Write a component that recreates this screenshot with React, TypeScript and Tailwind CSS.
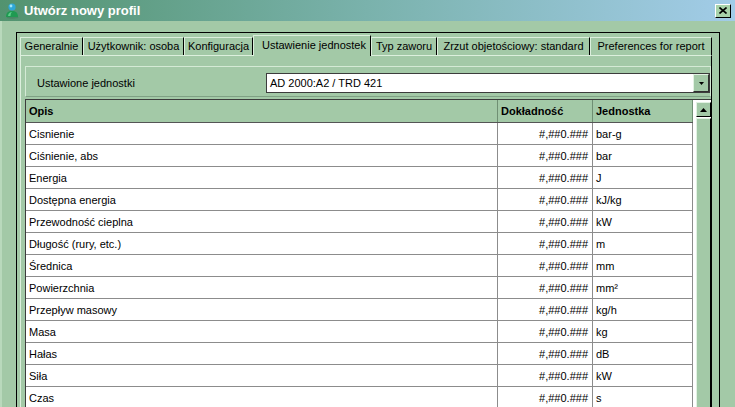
import React from 'react';

const ROWS: [string, string][] = [
  ['Cisnienie', 'bar-g'],
  ['Ciśnienie, abs', 'bar'],
  ['Energia', 'J'],
  ['Dostępna energia', 'kJ/kg'],
  ['Przewodność cieplna', 'kW'],
  ['Długość (rury, etc.)', 'm'],
  ['Średnica', 'mm'],
  ['Powierzchnia', 'mm²'],
  ['Przepływ masowy', 'kg/h'],
  ['Masa', 'kg'],
  ['Hałas', 'dB'],
  ['Siła', 'kW'],
  ['Czas', 's'],
];

const TABS = [
  { label: 'Generalnie', w: 'w-[63px]' },
  { label: 'Użytkownik: osoba', w: 'w-[101px]' },
  { label: 'Konfiguracja', w: 'w-[69px]' },
  { label: 'Ustawienie jednostek', w: 'w-[118px]', active: true },
  { label: 'Typ zaworu', w: 'w-[66px]' },
  { label: 'Zrzut objetościowy: standard', w: 'w-[153px]' },
  { label: 'Preferences for report', w: 'w-[122px]' },
];

function ProfileIcon() {
  return (
    <svg width="16" height="17" viewBox="0 0 16 17">
      <ellipse cx="8.5" cy="15.5" rx="6" ry="1.2" fill="#3f7a5a" opacity="0.5" />
      <path d="M2 15 C2 10.5 4.5 9 8 9 C11.5 9 14 10.5 14 15 Z" fill="#1f9a52" />
      <path d="M4 14 C4.5 11 6 10 8 10 C7 11 6.5 12.5 6.5 14 Z" fill="#5cd08a" />
      <circle cx="8" cy="5" r="3.6" fill="#2fa8d8" />
      <circle cx="7" cy="4" r="1.4" fill="#9fe4f8" />
    </svg>
  );
}

function TitleBar() {
  return (
    <div className="h-[21px] shrink-0 flex items-center bg-linear-to-r from-[#52936f] via-[#7ab2ac] to-[#a2cce8]">
      <div className="ml-[4px] w-[17px] flex items-center">
        <ProfileIcon />
      </div>
      <span className="ml-[3px] text-[13px] font-bold text-white leading-none">Utwórz nowy profil</span>
      <div className="ml-auto mr-[4px] w-[16px] h-[14px] bg-[#a8d3aa] border-t border-l border-white border-r border-b border-r-black border-b-black flex items-center justify-center">
        <svg width="8" height="7" viewBox="0 0 8 7">
          <path d="M0.5 0.5 L7.5 6.5 M7.5 0.5 L0.5 6.5" stroke="#000" strokeWidth="1.6" />
        </svg>
      </div>
    </div>
  );
}

function Tabs() {
  return (
    <div className="h-[20px] mt-[2px] pl-[3px] flex items-end shrink-0">
      {TABS.map((t) =>
        t.active ? (
          <div
            key={t.label}
            className={`${t.w} h-[21px] -mb-px relative z-10 bg-[#a3c9a7] border-t border-l border-[#dcefdd] border-r border-r-black pl-[8px] pt-[3px] whitespace-nowrap leading-[13px]`}
          >
            {t.label}
          </div>
        ) : (
          <div
            key={t.label}
            className={`${t.w} h-[18px] bg-[#a3c9a7] border-t border-l border-[#dcefdd] border-r border-r-black flex justify-center pt-[2px] whitespace-nowrap leading-[13px] overflow-hidden`}
          >
            {t.label}
          </div>
        ),
      )}
    </div>
  );
}

function UnitsSelector() {
  return (
    <div className="mt-[10px] h-[31px] shrink-0 border border-[#d4ead5] border-b-[#7fa184] border-r-[#d4ead5] flex items-start pt-[6px] pl-[11px]">
      <span className="w-[229px] leading-[20px]">Ustawione jednostki</span>
      <div className="w-[444px] h-[20px] bg-white border border-[#3c3c3c] flex items-stretch">
        <span className="flex-1 pl-[3px] leading-[18px]">AD 2000:A2 / TRD 421</span>
        <div className="w-[16px] bg-[#a3c9a7] border-t border-l border-[#e2f2e3] border-r border-b border-r-[#303030] border-b-[#303030] flex items-center justify-center">
          <svg width="5" height="3" viewBox="0 0 5 3">
            <path d="M0 0 H5 L2.5 3 Z" fill="#000" />
          </svg>
        </div>
      </div>
    </div>
  );
}

function UnitsTable() {
  return (
    <div className="mt-[2px] flex-1 min-h-0 flex border-t border-l border-[#3c3c3c] overflow-hidden">
      <div className="w-[667px] flex flex-col">
        <div className="h-[23px] shrink-0 flex bg-[#a3c9a7] border-b border-[#555] font-bold">
          <div className="w-[472px] border-r border-[#6f8f73] pl-[3px] flex items-center">Opis</div>
          <div className="w-[95px] border-r border-[#6f8f73] pl-[3px] flex items-center">Dokładność</div>
          <div className="w-[100px] border-r border-[#6f8f73] pl-[3px] flex items-center">Jednostka</div>
        </div>
        {ROWS.map(([name, unit]) => (
          <div key={name} className="h-[22px] shrink-0 flex bg-white border-b border-[#8c8c8c]">
            <div className="w-[472px] border-r border-[#8c8c8c] pl-[3px] pt-px flex items-center">{name}</div>
            <div className="w-[95px] border-r border-[#8c8c8c] pr-[4px] pt-px flex items-center justify-end">#,##0.###</div>
            <div className="w-[100px] border-r border-[#8c8c8c] pl-[3px] pt-px flex items-center">{unit}</div>
          </div>
        ))}
      </div>
      <div className="w-[18px] bg-white pl-[3px] pt-[2px] flex flex-col">
        <div className="h-[15px] shrink-0 bg-[#a3c9a7] border-t border-l border-[#e2f2e3] border-r border-b border-r-black border-b-black flex items-center justify-center">
          <svg width="7" height="4" viewBox="0 0 7 4">
            <path d="M3.5 0 L7 4 H0 Z" fill="#000" />
          </svg>
        </div>
        <div className="flex-1 mt-px bg-[#a3c9a7] border-t border-l border-[#e2f2e3] border-r border-r-black" />
      </div>
    </div>
  );
}

export default function App() {
  return (
    <div className="w-[735px] h-[407px] overflow-hidden bg-[#a3c9a7] flex flex-col font-['Liberation_Sans',Arial,sans-serif] text-[11px] text-black">
      <TitleBar />
      <div className="flex-1 min-h-0 flex pl-[16px] pt-[11px] border-l-2 border-[#b9d9bc]">
        <div className="-ml-[2px] w-[704px] flex flex-col border-l border-t border-r border-black">
          <Tabs />
          <div className="flex-1 min-h-0 ml-[3px] w-[692px] flex flex-col pl-[4px] border-t border-l border-[#dcefdd] border-r border-r-black">
            <UnitsSelector />
            <UnitsTable />
          </div>
        </div>
      </div>
    </div>
  );
}
